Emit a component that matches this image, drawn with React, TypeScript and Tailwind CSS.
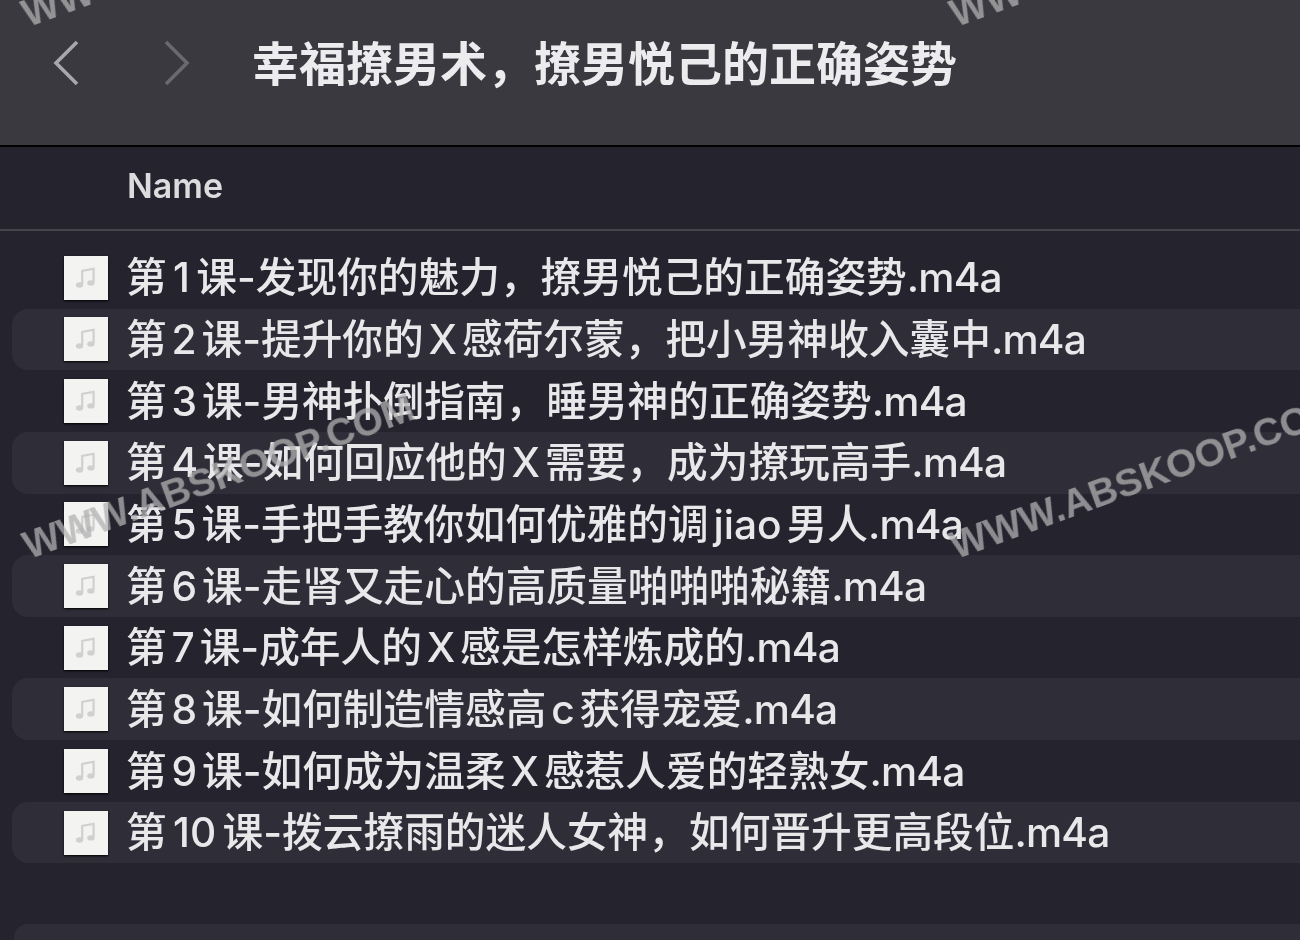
const cjk = '"Inter", "Noto Sans CJK SC", "Liberation Sans", sans-serif';

const files = [
  ["1", "课-发现你的魅力，撩男悦己的正确姿势"],
  ["2", "课-提升你的 X 感荷尔蒙，把小男神收入囊中"],
  ["3", "课-男神扑倒指南，睡男神的正确姿势"],
  ["4", "课-如何回应他的 X 需要，成为撩玩高手"],
  ["5", "课-手把手教你如何优雅的调 jiao 男人"],
  ["6", "课-走肾又走心的高质量啪啪啪秘籍"],
  ["7", "课-成年人的 X 感是怎样炼成的"],
  ["8", "课-如何制造情感高 c 获得宠爱"],
  ["9", "课-如何成为温柔 X 感惹人爱的轻熟女"],
  ["10", "课-拨云撩雨的迷人女神，如何晋升更高段位"],
];

function FileIcon() {
  return (
    <div className="flex h-[44px] w-[44px] shrink-0 items-center justify-center bg-[#f3f3f1] shadow-[0_1px_2px_#000]">
      <svg width="26" height="26" viewBox="0 0 24 24" fill="none" className="blur-[0.6px]">
        <path d="M8.5 18V5.5L19 3.5V16" stroke="#d0d0ce" strokeWidth="2" />
        <ellipse cx="6" cy="18.5" rx="3.4" ry="2.5" fill="#d0d0ce" />
        <ellipse cx="16.5" cy="16.5" rx="3.4" ry="2.5" fill="#d0d0ce" />
      </svg>
    </div>
  );
}

function Watermark({ className }: { className: string }) {
  return (
    <div
      className={`pointer-events-none absolute origin-bottom-left -rotate-[20deg] whitespace-nowrap text-[39px] font-bold leading-none text-[#b0b0b2]/75 blur-[0.4px] ${className}`}
      style={{ fontFamily: '"Liberation Sans", sans-serif' }}
    >
      WWW.ABSKOOP.COM
    </div>
  );
}

export default function App() {
  return (
    <div
      className="relative flex h-[940px] w-[1300px] flex-col overflow-hidden bg-[#24232e]"
      style={{ fontFamily: cjk }}
    >
      <header className="flex h-[147px] shrink-0 items-start border-b-2 border-black bg-[#3a3940] pl-[50px] pt-[38px]">
        <svg width="32" height="50" viewBox="0 0 32 50" fill="none" className="shrink-0 blur-[0.4px]">
          <path d="M27 4L6 25L27 46" stroke="#a8a8ab" strokeWidth="3.6" />
        </svg>
        <svg width="32" height="50" viewBox="0 0 32 50" fill="none" className="ml-[78px] shrink-0 blur-[0.4px]">
          <path d="M6 4L27 25L6 46" stroke="#6a6a6e" strokeWidth="3.6" />
        </svg>
        <h1 className="ml-[60px] mt-[1px] whitespace-nowrap text-[47px] font-semibold leading-[50px] text-[#ececee] blur-[0.5px]">
          幸福撩男术，撩男悦己的正确姿势
        </h1>
      </header>

      <div className="flex h-[84px] shrink-0 items-center border-b-2 border-[#45444d] pb-[4px] pl-[127px]">
        <span className="text-[34px] font-semibold leading-none text-[#dcdcdf] blur-[0.5px]">Name</span>
      </div>

      <main className="flex flex-1 flex-col pt-[16px]">
        {files.map(([num, name], i) => (
          <div
            key={num}
            className={`ml-[12px] flex h-[61.65px] shrink-0 items-center gap-[18px] rounded-l-[16px] pl-[52px] ${
              i % 2 === 1 ? "bg-[#2f2e38]" : ""
            }`}
          >
            <FileIcon />
            <span className="mt-[2px] whitespace-nowrap text-[40.7px] font-medium leading-none text-[#e8e8ea] blur-[0.5px] [word-spacing:-6px]">
              第 <span className={num === "1" || num === "10" ? "mx-[1.5px]" : ""}>{num}</span> {name}
              <span className="tracking-[-0.8px]">.m4a</span>
            </span>
          </div>
        ))}
      </main>

      <div className="ml-[14px] h-[16px] shrink-0 rounded-tl-[14px] bg-[#2f2e38]" />

      <Watermark className="left-[30px] top-[-6px]" />
      <Watermark className="left-[958px] top-[-6px]" />
      <Watermark className="left-[31px] top-[526px]" />
      <Watermark className="left-[958px] top-[526px]" />
    </div>
  );
}
